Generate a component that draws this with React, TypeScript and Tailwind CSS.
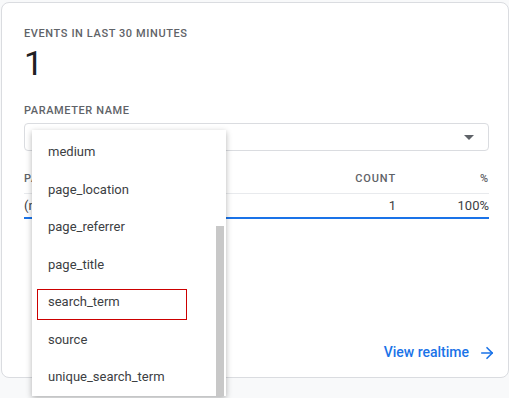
import { ArrowRight } from 'lucide-react';

const options = [
  'medium',
  'page_location',
  'page_referrer',
  'page_title',
  'search_term',
  'source',
  'unique_search_term',
];

export default function App() {
  return (
    <div
      className="relative w-[509px] h-[398px] overflow-hidden bg-[#f8f9fa]"
      style={{ fontFamily: 'Roboto, "Noto Sans", sans-serif' }}
    >
      <div className="ml-[1px] mt-[2px] w-[508px] h-[376px] bg-white border border-[#dadce0] rounded-lg px-[22px] pt-[24px] flex flex-col">
        <div className="text-[11px] font-medium tracking-[0.6px] text-[#5f6368] leading-[14px]">
          EVENTS IN LAST 30 MINUTES
        </div>
        <div className="text-[34px] leading-[40px] text-[#202124] mt-[2px]">1</div>
        <div className="text-[11px] font-medium tracking-[0.6px] text-[#5f6368] leading-[14px] mt-[21px]">
          PARAMETER NAME
        </div>
        <div className="mt-[5px] h-[28px] w-[465px] border border-[#dadce0] rounded flex items-center justify-end pr-[14px]">
          <div className="w-0 h-0 border-l-[5px] border-r-[5px] border-t-[5px] border-l-transparent border-r-transparent border-t-[#5f6368]" />
        </div>
        <div className="w-[465px] mt-[19px]">
          <div className="flex items-center h-[24px] border-b border-[#e8eaed] text-[11px] font-medium tracking-[0.9px] text-[#5f6368] pb-[4px]">
            <div className="flex-1">PARAMETER VALUE</div>
            <div className="w-[60px] text-right pr-[1px]">COUNT</div>
            <div className="w-[92px] text-right">%</div>
          </div>
          <div className="flex items-center h-[25px] border-b-2 border-[#1a73e8] text-[13px] text-[#3c4043]">
            <div className="flex-1">(not set)</div>
            <div className="w-[60px] text-right pr-[1px]">1</div>
            <div className="w-[92px] text-right">100%</div>
          </div>
        </div>
        <div className="flex-1" />
        <div className="flex justify-end items-center gap-[9px] pb-[14px] mr-[-10px] text-[14px] font-medium text-[#1a73e8]">
          <span>View realtime</span>
          <ArrowRight size={18} strokeWidth={2.2} />
        </div>
      </div>

      <div className="absolute left-[32px] top-[130px] w-[194px] h-[266px] bg-white shadow-[0_2px_6px_rgba(0,0,0,0.3)] overflow-hidden">
        <div className="pt-[3px]">
          {options.map((o) => (
            <div key={o} className="relative h-[37.5px] flex items-center pl-[16px] text-[13px] text-[#3c4043]">
              {o === 'search_term' && (
                <div className="absolute left-[5px] top-[6px] w-[150px] h-[31px] border border-[#cc0000]" />
              )}
              <span className="relative">{o}</span>
            </div>
          ))}
        </div>
        <div className="absolute right-[2px] top-[96px] w-[8px] bottom-0 bg-[#c8c8c8]" />
      </div>
    </div>
  );
}
